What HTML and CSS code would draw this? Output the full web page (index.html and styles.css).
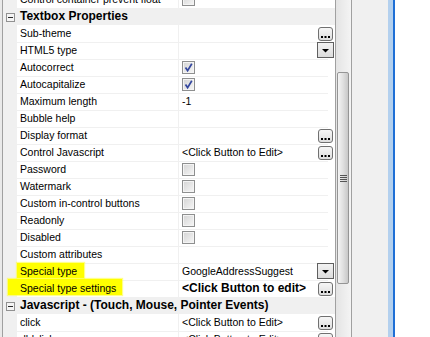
FILE: index.html
```html
<!DOCTYPE html>
<html lang="en">
<head>
    <meta charset="UTF-8">
    <title>Property Grid</title>
    <link rel="stylesheet" href="styles.css">
</head>
<body>
    <div class="window">
        <div class="frame-left"></div>
        <div class="grid">
            <div class="rows">
                <div class="row">
                    <div class="gutter"></div>
                    <div class="name">Control container prevent float</div>
                    <div class="value"><span class="check"></span></div>
                </div>

                <div class="cat">
                    <div class="gutter"><svg class="minus" width="9" height="9" viewBox="0 0 9 9"><rect x="0.5" y="0.5" width="8" height="8" fill="#f4f4f4" stroke="#919191"/><rect x="2" y="4" width="5" height="1" fill="#2b2b2b"/></svg></div>
                    <div class="cat-name">Textbox Properties</div>
                </div>

                <div class="row">
                    <div class="gutter"></div>
                    <div class="name">Sub-theme</div>
                    <div class="value"><span class="dots"><svg width="13" height="12" viewBox="0 0 13 12"><rect x="2" y="8" width="2" height="2"/><rect x="5.5" y="8" width="2" height="2"/><rect x="9" y="8" width="2" height="2"/></svg></span></div>
                </div>
                <div class="row">
                    <div class="gutter"></div>
                    <div class="name">HTML5 type</div>
                    <div class="value"><span class="drop"><svg width="15" height="14" viewBox="0 0 15 14"><path d="M4 6 L11 6 L7.5 9.5 Z"/></svg></span></div>
                </div>
                <div class="row">
                    <div class="gutter"></div>
                    <div class="name">Autocorrect</div>
                    <div class="value"><span class="check"><svg width="11" height="11" viewBox="0 0 11 11"><path d="M2.5 5.5 L4.6 8.6 L8.8 1.8" fill="none" stroke="#34479e" stroke-width="1.7"/></svg></span></div>
                </div>
                <div class="row">
                    <div class="gutter"></div>
                    <div class="name">Autocapitalize</div>
                    <div class="value"><span class="check"><svg width="11" height="11" viewBox="0 0 11 11"><path d="M2.5 5.5 L4.6 8.6 L8.8 1.8" fill="none" stroke="#34479e" stroke-width="1.7"/></svg></span></div>
                </div>
                <div class="row">
                    <div class="gutter"></div>
                    <div class="name">Maximum length</div>
                    <div class="value"><span class="text">-1</span></div>
                </div>
                <div class="row">
                    <div class="gutter"></div>
                    <div class="name">Bubble help</div>
                    <div class="value"></div>
                </div>
                <div class="row">
                    <div class="gutter"></div>
                    <div class="name">Display format</div>
                    <div class="value"><span class="dots"><svg width="13" height="12" viewBox="0 0 13 12"><rect x="2" y="8" width="2" height="2"/><rect x="5.5" y="8" width="2" height="2"/><rect x="9" y="8" width="2" height="2"/></svg></span></div>
                </div>
                <div class="row">
                    <div class="gutter"></div>
                    <div class="name">Control Javascript</div>
                    <div class="value"><span class="text">&lt;Click Button to Edit&gt;</span><span class="dots"><svg width="13" height="12" viewBox="0 0 13 12"><rect x="2" y="8" width="2" height="2"/><rect x="5.5" y="8" width="2" height="2"/><rect x="9" y="8" width="2" height="2"/></svg></span></div>
                </div>
                <div class="row">
                    <div class="gutter"></div>
                    <div class="name">Password</div>
                    <div class="value"><span class="check"></span></div>
                </div>
                <div class="row">
                    <div class="gutter"></div>
                    <div class="name">Watermark</div>
                    <div class="value"><span class="check"></span></div>
                </div>
                <div class="row">
                    <div class="gutter"></div>
                    <div class="name">Custom in-control buttons</div>
                    <div class="value"><span class="check"></span></div>
                </div>
                <div class="row">
                    <div class="gutter"></div>
                    <div class="name">Readonly</div>
                    <div class="value"><span class="check"></span></div>
                </div>
                <div class="row">
                    <div class="gutter"></div>
                    <div class="name">Disabled</div>
                    <div class="value"><span class="check"></span></div>
                </div>
                <div class="row">
                    <div class="gutter"></div>
                    <div class="name">Custom attributes</div>
                    <div class="value"></div>
                </div>
                <div class="row">
                    <div class="gutter"></div>
                    <div class="name"><span class="mark">Special type</span></div>
                    <div class="value"><span class="text">GoogleAddressSuggest</span><span class="drop"><svg width="15" height="14" viewBox="0 0 15 14"><path d="M4 6 L11 6 L7.5 9.5 Z"/></svg></span></div>
                </div>
                <div class="row">
                    <div class="gutter"></div>
                    <div class="name"><span class="mark mark-wide">Special type settings</span></div>
                    <div class="value"><span class="text bold">&lt;Click Button to edit&gt;</span><span class="dots"><svg width="13" height="12" viewBox="0 0 13 12"><rect x="2" y="8" width="2" height="2"/><rect x="5.5" y="8" width="2" height="2"/><rect x="9" y="8" width="2" height="2"/></svg></span></div>
                </div>

                <div class="cat">
                    <div class="gutter"><svg class="minus" width="9" height="9" viewBox="0 0 9 9"><rect x="0.5" y="0.5" width="8" height="8" fill="#f4f4f4" stroke="#919191"/><rect x="2" y="4" width="5" height="1" fill="#2b2b2b"/></svg></div>
                    <div class="cat-name">Javascript - (Touch, Mouse, Pointer Events)</div>
                </div>

                <div class="row">
                    <div class="gutter"></div>
                    <div class="name">click</div>
                    <div class="value"><span class="text">&lt;Click Button to Edit&gt;</span><span class="dots"><svg width="13" height="12" viewBox="0 0 13 12"><rect x="2" y="8" width="2" height="2"/><rect x="5.5" y="8" width="2" height="2"/><rect x="9" y="8" width="2" height="2"/></svg></span></div>
                </div>
                <div class="row">
                    <div class="gutter"></div>
                    <div class="name">dblclick</div>
                    <div class="value"><span class="text">&lt;Click Button to Edit&gt;</span><span class="dots"><svg width="13" height="12" viewBox="0 0 13 12"><rect x="2" y="8" width="2" height="2"/><rect x="5.5" y="8" width="2" height="2"/><rect x="9" y="8" width="2" height="2"/></svg></span></div>
                </div>
            </div>
        </div>

        <div class="scrollbar">
            <div class="thumb">
                <span class="grip"></span>
            </div>
        </div>
        <div class="side"></div>
        <div class="side-edge"></div>
    </div>
</body>
</html>
```

FILE: styles.css
```css
* {
    margin: 0;
    padding: 0;
    box-sizing: border-box;
}
body {
    font-family: "Liberation Sans", Arial, sans-serif;
    font-size: 10.5px;
    color: #000000;
    background-color: #ffffff;
}

.window {
    display: flex;
    width: 430px;
    height: 337px;
    overflow: hidden;
}

.frame-left {
    width: 2px;
    background-color: #e9e9e9;
}

/* property grid */
.grid {
    width: 333px;
    height: 337px;
    overflow: hidden;
    border-left: 1px solid #a0a0a0;
    background-color: #ffffff;
}
.rows {
    margin-top: -9px;
}

.row {
    display: grid;
    grid-template-columns: 14px 161px 150px;
    height: 17px;
}
.gutter {
    background-color: #f0f0f0;
}
.name {
    padding-left: 3px;
    line-height: 17px;
    white-space: nowrap;
    border-bottom: 1px solid #f0f0f0;
}
.value {
    display: flex;
    align-items: flex-start;
    padding-left: 3px;
    border-left: 1px solid #f0f0f0;
    border-bottom: 1px solid #f0f0f0;
    white-space: nowrap;
}
.text {
    line-height: 17px;
}
.bold {
    font-weight: bold;
    font-size: 12px;
    line-height: 16px;
}

.cat {
    display: grid;
    grid-template-columns: 14px 311px;
    height: 17px;
    background-color: #f0f0f0;
}
.cat-name {
    padding-left: 3px;
    font-size: 12px;
    font-weight: bold;
    line-height: 16px;
    white-space: nowrap;
}
.minus {
    display: block;
    margin: 5px 0 0 3px;
}

/* highlighter marks */
.mark {
    display: inline-block;
    height: 15px;
    line-height: 17px;
    vertical-align: top;
    margin-left: -3px;
    padding: 0 7px 0 3px;
    background-color: #ffff00;
    box-shadow: 0 0 1px 1px rgba(255, 255, 60, 0.6);
}
.mark-wide {
    position: relative;
    top: -1px;
    height: 16px;
    line-height: 19px;
    margin-left: -12px;
    padding: 0 6px 0 12px;
}

/* checkbox */
.check {
    display: block;
    width: 13px;
    height: 13px;
    margin-top: 2px;
    border: 1px solid #8e8f8f;
    background: linear-gradient(135deg, #d4d4d4, #f6f6f6);
    box-shadow: inset 0 0 0 1px #f4f4f4;
}
.check svg {
    display: block;
}

/* ... button */
.dots {
    display: block;
    width: 15px;
    height: 14px;
    margin: 2px -5px 0 auto;
    border: 1px solid #707070;
    border-radius: 3px;
    background: linear-gradient(#f6f6f6, #dedede);
}
.dots svg {
    display: block;
}

/* dropdown button */
.drop {
    display: block;
    width: 17px;
    height: 16px;
    margin: 0 -6px 0 auto;
    border: 1px solid #5f5f5f;
    background: linear-gradient(#f2f2f2, #dcdcdc);
}
.drop svg {
    display: block;
}

/* scrollbar */
.scrollbar {
    width: 17px;
    height: 337px;
    padding: 72px 2px 0 1px;
    border-left: 1px solid #a0a0a0;
    border-right: 1px solid #a0a0a0;
    background: linear-gradient(to right, #e4e4e4, #f4f4f4);
}
.thumb {
    display: flex;
    align-items: center;
    justify-content: center;
    height: 212px;
    border: 1px solid #959595;
    border-radius: 2px;
    background: linear-gradient(to right, #f4f4f4, #e0e0e0 50%, #c8c8c8);
}
.grip {
    display: block;
    width: 7px;
    height: 7px;
    background: repeating-linear-gradient(#555555 0, #555555 1px, transparent 1px, transparent 2px);
}

.side {
    width: 36px;
    background-color: #f0f0f0;
}
.side-edge {
    width: 7px;
    border-right: 2px solid #1e6fd6;
    background-color: #b3d0ee;
}
```
